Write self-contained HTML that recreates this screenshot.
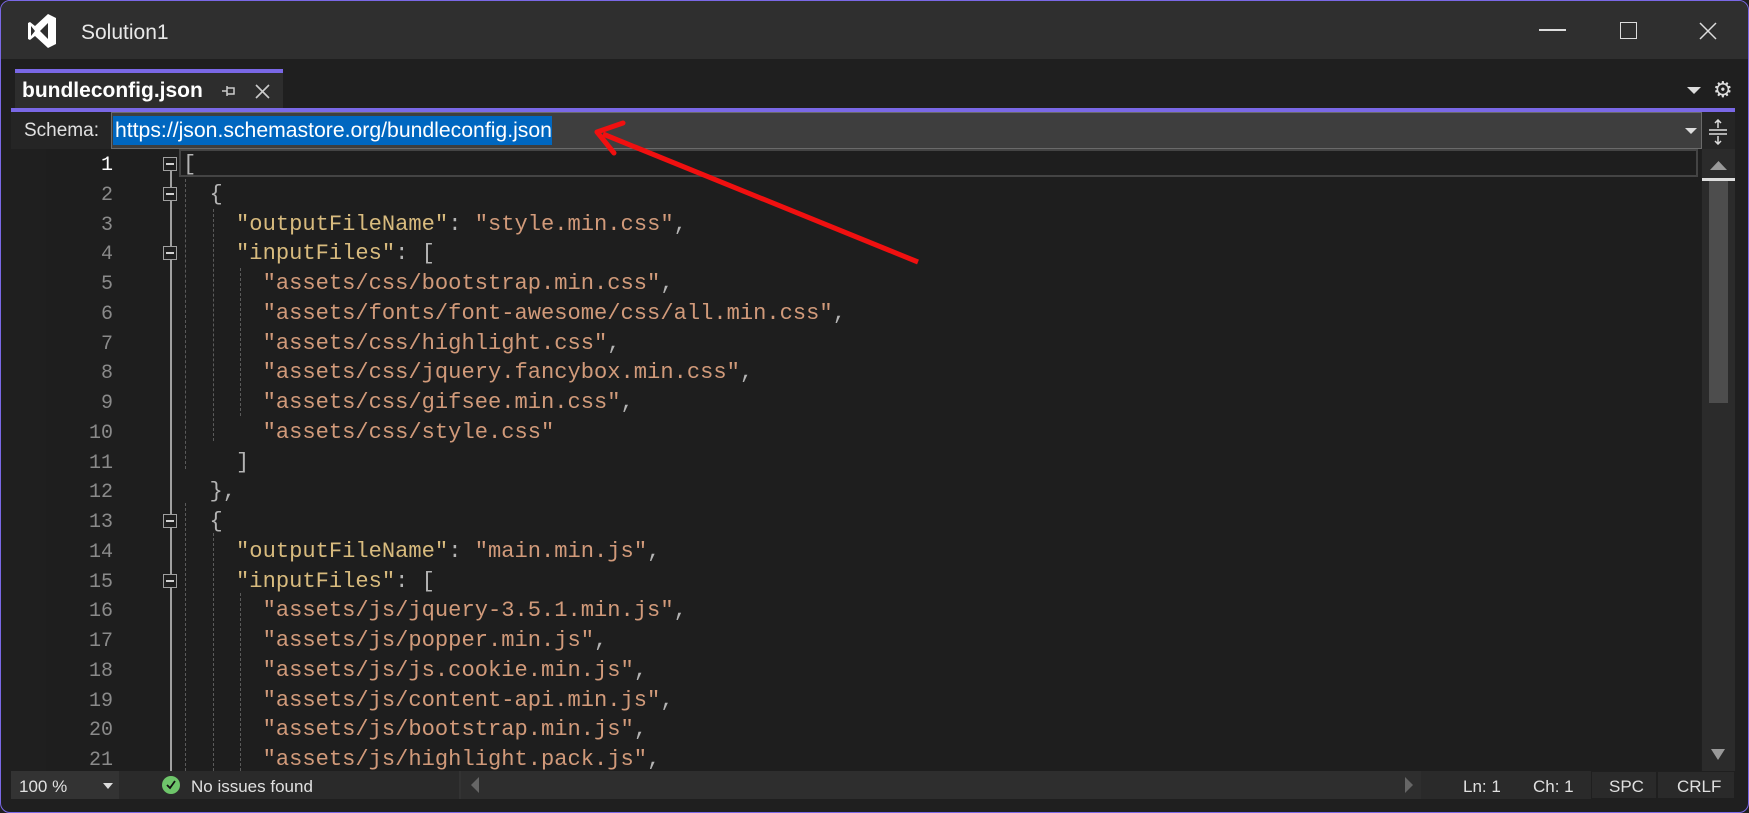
<!DOCTYPE html>
<html><head><meta charset="utf-8"><style>
*{margin:0;padding:0;box-sizing:border-box}
body{width:1749px;height:813px;background:#1f1f1f;overflow:hidden;font-family:"Liberation Sans",sans-serif;position:relative}
.win{position:absolute;left:0;top:0;width:1749px;height:813px;border:1.5px solid #7a68e6;border-radius:10px;background:#1f1f1f;overflow:hidden}
.abs{position:absolute}
.title{left:0;top:0;width:1749px;height:58px;background:#2f2f2f}
.code{position:absolute;left:0;top:0;font-family:"Liberation Mono",monospace;font-size:22.1px;white-space:pre;color:#b4b4b4}
.ln{position:absolute;width:112px;left:0;text-align:right;font-family:"Liberation Mono",monospace;font-size:20px;color:#8a8a8a}
.k{color:#d8bb7e}.s{color:#d19a7a}
.fold{position:absolute;left:162px;width:14px;height:14px;border:1.5px solid #a0a0a0;background:#1f1f1f}
.fold:after{content:"";position:absolute;left:2px;right:2px;top:5px;height:1.5px;background:#d0d0d0}
.dg{position:absolute;width:0;border-left:1.5px dashed #5a5a5a}
.sb{color:#e0e0e0;font-size:17px;position:absolute;top:776px}
</style></head><body>
<div class="win">
<div class="abs title"></div>
<svg class="abs" style="left:23px;top:12px" width="36" height="36" viewBox="0 0 30 36"><path d="M21 1 L29 5 V31 L21 35 L8 23 L3 27 L1 26 V10 L3 9 L8 13 Z M21 10 L13 18 L21 26 Z M4 13 V23 L8 18 Z" fill="#fff" fill-rule="evenodd"/></svg>
<div class="abs" style="left:80px;top:20px;color:#e8e8e8;font-size:21px">Solution1</div>
<div class="abs" style="left:1538px;top:28px;width:27px;height:1.5px;background:#ddd"></div>
<div class="abs" style="left:1619px;top:21px;width:17px;height:17px;border:1.5px solid #ddd"></div>
<svg class="abs" style="left:1698px;top:21px" width="18" height="18"><path d="M1 1L17 17M17 1L1 17" stroke="#ddd" stroke-width="1.5"/></svg>
<div class="abs" style="left:14px;top:68px;width:268px;height:4px;background:#7a68e6"></div>
<div class="abs" style="left:14px;top:72px;width:268px;height:35px;background:#2d2d2d"></div>
<div class="abs" style="left:21px;top:78px;color:#fff;font-size:21px;font-weight:bold">bundleconfig.json</div>
<svg class="abs" style="left:220px;top:84px" width="16" height="12"><path d="M1 6H6M6 1V11M6 3H13V9H6" stroke="#ccc" stroke-width="1.5" fill="none"/></svg>
<svg class="abs" style="left:254px;top:83px" width="15" height="15"><path d="M1 1L14 14M14 1L1 14" stroke="#ccc" stroke-width="1.6"/></svg>
<svg class="abs" style="left:1686px;top:86px" width="14" height="8"><path d="M0 0H14L7 7Z" fill="#ddd"/></svg>
<div class="abs" style="left:1712px;top:76px;color:#ddd;font-size:22px">⚙</div>
<div class="abs" style="left:10px;top:107px;width:1724px;height:4px;background:#7a68e6"></div>
<div class="abs" style="left:10px;top:111px;width:1724px;height:37px;background:#252525"></div>
<div class="abs" style="left:23px;top:119px;color:#e0e0e0;font-size:19px">Schema:</div>
<div class="abs" style="left:110px;top:111px;width:1591px;height:37px;background:#3e3e3e;border:1.5px solid #6a6a6a"></div>
<div class="abs" style="left:112px;top:115px;width:439px;height:29px;background:#0067c0"></div>
<div class="abs" style="left:114px;top:118px;color:#fff;font-size:21.2px">https://json.schemastore.org/bundleconfig.json</div>
<svg class="abs" style="left:1684px;top:127px" width="12" height="7"><path d="M0 0H12L6 6Z" fill="#ddd"/></svg>
<svg class="abs" style="left:1706px;top:118px" width="22" height="26"><path d="M2 11H20M2 15H20M11 1V9M8 4L11 1L14 4M11 17V25M8 22L11 25L14 22" stroke="#ddd" stroke-width="1.5" fill="none"/></svg>
<div class="abs" style="left:45px;top:148px;width:1655px;height:622px;background:#1e1e1e"></div>
<div class="abs" style="left:178px;top:148px;width:1519px;height:28px;border:2px solid #444"></div>
<div class="abs" style="left:169px;top:163px;width:1.5px;height:607px;background:#a0a0a0"></div>
<div class="fold" style="top:156px"></div><div class="fold" style="top:186px"></div><div class="fold" style="top:245px"></div><div class="fold" style="top:513px"></div><div class="fold" style="top:573px"></div>
<div class="dg" style="left:184px;top:178px;height:290px"></div>
<div class="dg" style="left:184px;top:502px;height:268px"></div>
<div class="dg" style="left:212px;top:208px;height:232px"></div>
<div class="dg" style="left:212px;top:532px;height:238px"></div>
<div class="dg" style="left:239px;top:267px;height:148px"></div>
<div class="dg" style="left:239px;top:592px;height:178px"></div>
<div class="code" style="left:182px;top:149px;line-height:29.75px">[
  {
    <span class="k">"outputFileName"</span>: <span class="s">"style.min.css"</span>,
    <span class="k">"inputFiles"</span>: [
      <span class="s">"assets/css/bootstrap.min.css"</span>,
      <span class="s">"assets/fonts/font-awesome/css/all.min.css"</span>,
      <span class="s">"assets/css/highlight.css"</span>,
      <span class="s">"assets/css/jquery.fancybox.min.css"</span>,
      <span class="s">"assets/css/gifsee.min.css"</span>,
      <span class="s">"assets/css/style.css"</span>
    ]
  },
  {
    <span class="k">"outputFileName"</span>: <span class="s">"main.min.js"</span>,
    <span class="k">"inputFiles"</span>: [
      <span class="s">"assets/js/jquery-3.5.1.min.js"</span>,
      <span class="s">"assets/js/popper.min.js"</span>,
      <span class="s">"assets/js/js.cookie.min.js"</span>,
      <span class="s">"assets/js/content-api.min.js"</span>,
      <span class="s">"assets/js/bootstrap.min.js"</span>,
      <span class="s">"assets/js/highlight.pack.js"</span>,</div>
<div class="ln" style="top:150px;line-height:29.75px;white-space:pre"><span style="color:#fff">1</span>
2
3
4
5
6
7
8
9
10
11
12
13
14
15
16
17
18
19
20
21</div>
<div class="abs" style="left:1701px;top:148px;width:33px;height:622px;background:#2b2b2b"></div>
<svg class="abs" style="left:1709px;top:160px" width="17" height="9"><path d="M0 9L8.5 0L17 9Z" fill="#999"/></svg>
<div class="abs" style="left:1701px;top:177px;width:33px;height:3px;background:#ddd"></div>
<div class="abs" style="left:1708px;top:180px;width:19px;height:222px;background:#4d4d4d"></div>
<svg class="abs" style="left:1710px;top:748px" width="14" height="11"><path d="M0 0H14L7 11Z" fill="#999"/></svg>
<div class="abs" style="left:10px;top:770px;width:1724px;height:28px;background:#333"></div>
<div class="abs" style="left:118px;top:770px;width:340px;height:28px;background:#2a2a2a"></div>
<div class="abs" style="left:460px;top:770px;width:960px;height:28px;background:#2e2e2e"></div>
<div class="abs" style="left:1420px;top:770px;width:314px;height:28px;background:#2a2a2a"></div>
<div class="abs" style="left:1590px;top:770px;width:66px;height:28px;border:1.5px solid #1f1f1f"></div>
<div class="abs" style="left:1656px;top:770px;width:78px;height:28px;border:1.5px solid #1f1f1f"></div>
<div class="sb" style="left:18px">100 %</div>
<svg class="abs" style="left:102px;top:782px" width="10" height="6"><path d="M0 0H10L5 6Z" fill="#ddd"/></svg>
<div class="abs" style="left:161px;top:775px;width:18px;height:18px;border-radius:50%;background:#6ec56a"></div>
<svg class="abs" style="left:161px;top:775px" width="18" height="18"><path d="M5 9L8 12L13 5" stroke="#111" stroke-width="1.8" fill="none"/></svg>
<div class="sb" style="left:190px">No issues found</div>
<svg class="abs" style="left:470px;top:776px" width="8" height="16"><path d="M8 0V16L0 8Z" fill="#666"/></svg>
<svg class="abs" style="left:1404px;top:776px" width="8" height="16"><path d="M0 0V16L8 8Z" fill="#666"/></svg>
<div class="sb" style="left:1462px">Ln: 1</div>
<div class="sb" style="left:1532px">Ch: 1</div>
<div class="sb" style="left:1608px">SPC</div>
<div class="sb" style="left:1676px">CRLF</div>
<svg class="abs" style="left:0;top:0" width="1749" height="813"><path d="M917 261L602 133" stroke="#f01010" stroke-width="5" fill="none"/><path d="M596 131L622 122M596 131L613 152" stroke="#f01010" stroke-width="5" fill="none" stroke-linecap="round"/></svg>
</div>
</body></html>
